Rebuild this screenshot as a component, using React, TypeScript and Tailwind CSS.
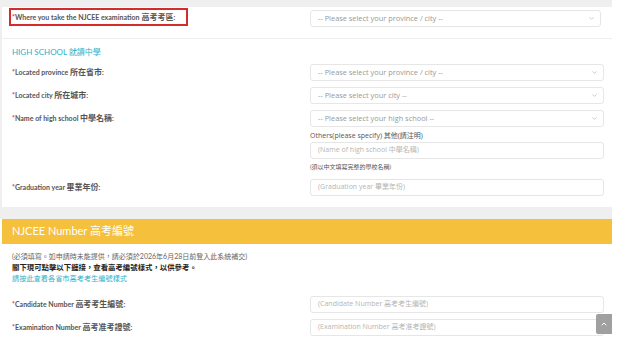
import { ChevronDown, ChevronUp } from 'lucide-react';

const lato = { fontFamily: 'Lato, "Noto Sans CJK TC", sans-serif' };
const open = '[font-family:"Open_Sans","Noto_Sans_CJK_TC",sans-serif]';

function Label({ en, zh }: { en: string; zh: string }) {
  return (
    <div className="pt-[2px] text-[7px] leading-[12px] font-bold text-[#555] whitespace-nowrap">
      <span className="text-[#e53935]">*</span>
      {en} <span className="text-[8px]">{zh}</span>:
    </div>
  );
}

function Select({ placeholder }: { placeholder: string }) {
  return (
    <div className={`${open} h-[17px] flex items-center justify-between rounded-[3px] border border-[#e6e6e6] bg-white pl-[7px] pr-[5px] text-[7.4px] text-[#999]`}>
      <span>{placeholder}</span>
      <ChevronDown size={7} strokeWidth={2} className="text-[#aaa]" />
    </div>
  );
}

function Input({ placeholder }: { placeholder: string }) {
  return (
    <div className={`${open} h-[17px] flex items-center rounded-[3px] border border-[#e6e6e6] bg-white pl-[7px] text-[7px] text-[#b5b5b5]`}>
      {placeholder}
    </div>
  );
}

function Row({ en, zh, children }: { en: string; zh: string; children: React.ReactNode }) {
  return (
    <div className="grid grid-cols-[298px_294px] items-start">
      <Label en={en} zh={zh} />
      <div>{children}</div>
    </div>
  );
}

export default function App() {
  return (
    <div className="min-h-screen bg-white" style={lato}>
      <div className="w-[612px] bg-[#efefef] pl-[2px] pt-[7px] pb-[12px]">
        <div className="bg-white">
          {/* exam location */}
          <div className="grid grid-cols-[298px_294px] items-start pl-[7px] pt-[1px] pb-[11px] border-b border-[#eeeeee]">
            <div className="w-[179px] h-[18px] flex items-center border-2 border-[#d62b2b] pl-[1px] text-[7px] font-bold text-[#555] whitespace-nowrap">
              <span className="text-[#e53935]">*</span>Where you take the NJCEE examination <span className="text-[8px] ml-[2px]">高考考區</span>:
            </div>
            <div className="mt-[2px] ml-[3px]">
              <Select placeholder="-- Please select your province / city --" />
            </div>
          </div>

          <div className="pl-[10px] pb-[11px]">
            <div className="mt-[7px] text-[8px] leading-[12px] text-[#2fb0c8]">HIGH SCHOOL 就讀中學</div>
            <div className="mt-[6px] flex flex-col gap-[6px]">
              <Row en="Located province" zh="所在省市">
                <Select placeholder="-- Please select your province / city --" />
              </Row>
              <Row en="Located city" zh="所在城市">
                <Select placeholder="-- Please select your city --" />
              </Row>
              <Row en="Name of high school" zh="中學名稱">
                <Select placeholder="-- Please select your high school --" />
                <div className={`${open} mt-[3px] text-[7px] leading-[12px] text-[#555]`}>Others(please specify) 其他(請注明)</div>
                <Input placeholder="(Name of high school 中學名稱)" />
                <div className="mt-[3px] text-[6px] leading-[10px] text-[#555]">(須以中文填寫完整的學校名稱)</div>
              </Row>
            </div>
            <div className="mt-[7px]">
              <Row en="Graduation year" zh="畢業年份">
                <Input placeholder="(Graduation year 畢業年份)" />
              </Row>
            </div>
          </div>
        </div>
      </div>

      <div className="w-[612px] pl-[2px] bg-white">
        <div className="h-[25px] bg-[#f5c03c] flex items-center pl-[10px] text-[11px] text-white">
          NJCEE Number 高考編號
        </div>
        <div className="pl-[10px] pt-[7px]">
          <div className="text-[7px] leading-[11px] text-[#666]">
            (必須填寫。如申請時未能提供，請必須於2026年6月28日前登入此系統補交)
          </div>
          <div className="text-[7.4px] leading-[11px] font-bold text-[#222]">
            閣下現可點擊以下鏈接，查看高考編號樣式，以供參考。
          </div>
          <div className="text-[7.2px] leading-[11px] text-[#2fb0c8]">請按此查看各省市高考考生編號樣式</div>
          <div className="mt-[12px] flex flex-col gap-[6px]">
            <Row en="Candidate Number" zh="高考考生編號">
              <Input placeholder="(Candidate Number 高考考生編號)" />
            </Row>
            <Row en="Examination Number" zh="高考准考證號">
              <Input placeholder="(Examination Number 高考准考證號)" />
            </Row>
          </div>
        </div>
      </div>

      <div className="fixed left-[596px] top-[314px] w-[16px] h-[20px] rounded-l-[2px] bg-[#a0a0a0] flex items-center justify-center">
        <ChevronUp size={8} strokeWidth={3} className="text-white" />
      </div>
    </div>
  );
}
